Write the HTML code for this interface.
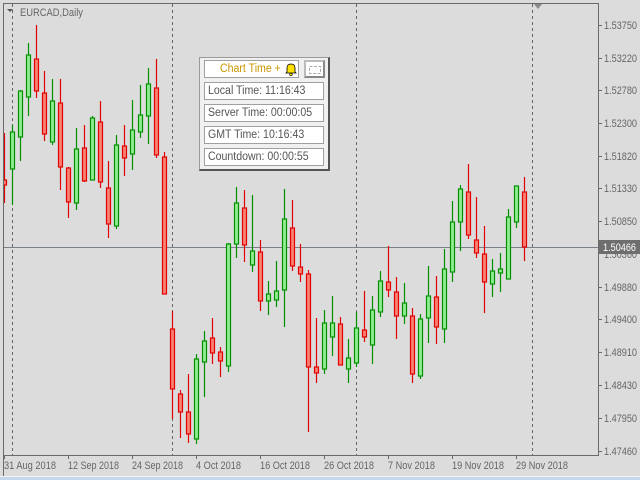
<!DOCTYPE html>
<html><head><meta charset="utf-8"><style>
html,body{margin:0;padding:0;width:640px;height:480px;overflow:hidden;background:#dcdcdc;font-family:"Liberation Sans",sans-serif}
svg{position:absolute;left:0;top:0}
.p{position:absolute;left:199px;top:57px;width:128px;height:111px;background:#f0f0f0;border:1px solid #9a9a9a;border-right:2px solid #555;border-bottom:2px solid #555}
.b{position:absolute;background:#fff;border:1px solid #a0a0a0;font-size:11.5px;color:#555;line-height:16px;box-sizing:border-box;height:18px;padding-left:3px;white-space:nowrap}
.b span{display:inline-block;transform:scaleX(.92);transform-origin:left}
</style></head><body>
<svg width="640" height="480" font-family="Liberation Sans, sans-serif">
<rect x="0" y="477" width="640" height="3" fill="#c5d7ec"/>
<rect x="0" y="476" width="640" height="1" fill="#f4f4f4"/>
<g stroke="#666" stroke-dasharray="3,3" stroke-width="1">
<line x1="12.5" y1="4" x2="12.5" y2="455"/><line x1="172.5" y1="4" x2="172.5" y2="455"/>
<line x1="356.5" y1="4" x2="356.5" y2="455"/><line x1="532.5" y1="4" x2="532.5" y2="455"/>
</g>
<line x1="3" y1="247.5" x2="598" y2="247.5" stroke="#7a8088" stroke-width="1"/>
<g stroke-width="1.2">
<g stroke="#e00000" fill="#fa8072">
<line x1="4.5" y1="133" x2="4.5" y2="203"/><rect x="2.5" y="180" width="4" height="5"/>
<line x1="36.5" y1="25" x2="36.5" y2="98"/><rect x="34.5" y="59" width="4" height="32"/>
<line x1="44.5" y1="71" x2="44.5" y2="141"/><rect x="42.5" y="93" width="4" height="41"/>
<line x1="60.5" y1="79" x2="60.5" y2="190"/><rect x="58.5" y="103" width="4" height="64"/>
<line x1="68.5" y1="167" x2="68.5" y2="218"/><rect x="66.5" y="168" width="4" height="34"/>
<line x1="84.5" y1="125" x2="84.5" y2="182"/><rect x="82.5" y="148" width="4" height="33"/>
<line x1="100.5" y1="101" x2="100.5" y2="188"/><rect x="98.5" y="122" width="4" height="60"/>
<line x1="108.5" y1="161" x2="108.5" y2="238"/><rect x="106.5" y="188" width="4" height="36"/>
<line x1="124.5" y1="125" x2="124.5" y2="176"/><rect x="122.5" y="146" width="4" height="12"/>
<line x1="156.5" y1="59" x2="156.5" y2="158"/><rect x="154.5" y="88" width="4" height="67"/>
<line x1="164.5" y1="152" x2="164.5" y2="294"/><rect x="162.5" y="157" width="4" height="137"/>
<line x1="172.5" y1="311" x2="172.5" y2="419"/><rect x="170.5" y="329" width="4" height="60"/>
<line x1="180.5" y1="390" x2="180.5" y2="438"/><rect x="178.5" y="394" width="4" height="18"/>
<line x1="188.5" y1="374" x2="188.5" y2="443"/><rect x="186.5" y="412" width="4" height="22"/>
<line x1="212.5" y1="318" x2="212.5" y2="364"/><rect x="210.5" y="338" width="4" height="15"/>
<line x1="220.5" y1="347" x2="220.5" y2="377"/><rect x="218.5" y="352" width="4" height="9"/>
<line x1="244.5" y1="190" x2="244.5" y2="262"/><rect x="242.5" y="208" width="4" height="37"/>
<line x1="260.5" y1="240" x2="260.5" y2="311"/><rect x="258.5" y="252" width="4" height="49"/>
<line x1="292.5" y1="200" x2="292.5" y2="271"/><rect x="290.5" y="228" width="4" height="38"/>
<line x1="300.5" y1="244" x2="300.5" y2="282"/><rect x="298.5" y="267" width="4" height="7"/>
<line x1="308.5" y1="270" x2="308.5" y2="432"/><rect x="306.5" y="274" width="4" height="93"/>
<line x1="316.5" y1="318" x2="316.5" y2="383"/><rect x="314.5" y="367" width="4" height="6"/>
<line x1="340.5" y1="317" x2="340.5" y2="365"/><rect x="338.5" y="324" width="4" height="41"/>
<line x1="364.5" y1="291" x2="364.5" y2="342"/><rect x="362.5" y="330" width="4" height="7"/>
<line x1="388.5" y1="246" x2="388.5" y2="297"/><rect x="386.5" y="282" width="4" height="8"/>
<line x1="396.5" y1="277" x2="396.5" y2="339"/><rect x="394.5" y="292" width="4" height="24"/>
<line x1="412.5" y1="308" x2="412.5" y2="383"/><rect x="410.5" y="316" width="4" height="58"/>
<line x1="436.5" y1="276" x2="436.5" y2="344"/><rect x="434.5" y="297" width="4" height="30"/>
<line x1="468.5" y1="164" x2="468.5" y2="239"/><rect x="466.5" y="192" width="4" height="43"/>
<line x1="476.5" y1="197" x2="476.5" y2="258"/><rect x="474.5" y="240" width="4" height="13"/>
<line x1="484.5" y1="226" x2="484.5" y2="313"/><rect x="482.5" y="254" width="4" height="28"/>
<line x1="524.5" y1="177" x2="524.5" y2="261"/><rect x="522.5" y="192" width="4" height="55"/>
</g>
<g stroke="#009000" fill="#90ee90">
<line x1="12.5" y1="125" x2="12.5" y2="205"/><rect x="10.5" y="132" width="4" height="37"/>
<line x1="20.5" y1="90" x2="20.5" y2="161"/><rect x="18.5" y="91" width="4" height="46"/>
<line x1="28.5" y1="43" x2="28.5" y2="116"/><rect x="26.5" y="55" width="4" height="42"/>
<line x1="52.5" y1="79" x2="52.5" y2="145"/><rect x="50.5" y="101" width="4" height="41"/>
<line x1="76.5" y1="128" x2="76.5" y2="210"/><rect x="74.5" y="149" width="4" height="54"/>
<line x1="92.5" y1="116" x2="92.5" y2="180"/><rect x="90.5" y="118" width="4" height="62"/>
<line x1="116.5" y1="135" x2="116.5" y2="229"/><rect x="114.5" y="145" width="4" height="81"/>
<line x1="132.5" y1="100" x2="132.5" y2="170"/><rect x="130.5" y="130" width="4" height="24"/>
<line x1="140.5" y1="85" x2="140.5" y2="138"/><rect x="138.5" y="115" width="4" height="17"/>
<line x1="148.5" y1="68" x2="148.5" y2="144"/><rect x="146.5" y="84" width="4" height="32"/>
<line x1="196.5" y1="354" x2="196.5" y2="444"/><rect x="194.5" y="359" width="4" height="80"/>
<line x1="204.5" y1="331" x2="204.5" y2="397"/><rect x="202.5" y="341" width="4" height="21"/>
<line x1="228.5" y1="243" x2="228.5" y2="372"/><rect x="226.5" y="244" width="4" height="122"/>
<line x1="236.5" y1="187" x2="236.5" y2="258"/><rect x="234.5" y="203" width="4" height="41"/>
<line x1="252.5" y1="195" x2="252.5" y2="272"/><rect x="250.5" y="251" width="4" height="14"/>
<line x1="268.5" y1="281" x2="268.5" y2="315"/><rect x="266.5" y="294" width="4" height="7"/>
<line x1="276.5" y1="261" x2="276.5" y2="307"/><rect x="274.5" y="291" width="4" height="9"/>
<line x1="284.5" y1="189" x2="284.5" y2="327"/><rect x="282.5" y="219" width="4" height="71"/>
<line x1="324.5" y1="310" x2="324.5" y2="374"/><rect x="322.5" y="323" width="4" height="46"/>
<line x1="332.5" y1="296" x2="332.5" y2="356"/><rect x="330.5" y="323" width="4" height="14"/>
<line x1="348.5" y1="339" x2="348.5" y2="383"/><rect x="346.5" y="358" width="4" height="11"/>
<line x1="356.5" y1="312" x2="356.5" y2="367"/><rect x="354.5" y="328" width="4" height="35"/>
<line x1="372.5" y1="296" x2="372.5" y2="364"/><rect x="370.5" y="310" width="4" height="35"/>
<line x1="380.5" y1="271" x2="380.5" y2="317"/><rect x="378.5" y="281" width="4" height="31"/>
<line x1="404.5" y1="283" x2="404.5" y2="324"/><rect x="402.5" y="303" width="4" height="13"/>
<line x1="420.5" y1="314" x2="420.5" y2="379"/><rect x="418.5" y="319" width="4" height="57"/>
<line x1="428.5" y1="266" x2="428.5" y2="343"/><rect x="426.5" y="296" width="4" height="22"/>
<line x1="444.5" y1="249" x2="444.5" y2="343"/><rect x="442.5" y="269" width="4" height="60"/>
<line x1="452.5" y1="201" x2="452.5" y2="282"/><rect x="450.5" y="222" width="4" height="50"/>
<line x1="460.5" y1="185" x2="460.5" y2="251"/><rect x="458.5" y="189" width="4" height="33"/>
<line x1="492.5" y1="259" x2="492.5" y2="297"/><rect x="490.5" y="271" width="4" height="13"/>
<line x1="500.5" y1="253" x2="500.5" y2="292"/><rect x="498.5" y="269" width="4" height="4"/>
<line x1="508.5" y1="209" x2="508.5" y2="279"/><rect x="506.5" y="217" width="4" height="62"/>
<line x1="516.5" y1="186" x2="516.5" y2="228"/><rect x="514.5" y="186" width="4" height="36"/>
</g></g>
<rect x="0" y="0" width="3" height="476" fill="#dcdcdc"/>
<g stroke="#6a6a6a" fill="none"><line x1="3.5" y1="3" x2="3.5" y2="476"/><line x1="3" y1="3.5" x2="598" y2="3.5"/><line x1="598.5" y1="3" x2="598.5" y2="455"/><line x1="3" y1="455.5" x2="599" y2="455.5"/></g>
<polygon points="7,9 13,9 10,12" fill="#555"/>
<text x="20" y="16" font-size="11" fill="#666" textLength="63" lengthAdjust="spacingAndGlyphs">EURCAD,Daily</text>
<polygon points="534,4 542,4 538,9" fill="#8a8a8a"/>
<g stroke="#6a6a6a">
<line x1="598" y1="25.5" x2="602" y2="25.5"/><line x1="598" y1="58.5" x2="602" y2="58.5"/><line x1="598" y1="90.5" x2="602" y2="90.5"/><line x1="598" y1="123.5" x2="602" y2="123.5"/><line x1="598" y1="156.5" x2="602" y2="156.5"/><line x1="598" y1="188.5" x2="602" y2="188.5"/><line x1="598" y1="221.5" x2="602" y2="221.5"/><line x1="598" y1="287.5" x2="602" y2="287.5"/><line x1="598" y1="319.5" x2="602" y2="319.5"/><line x1="598" y1="352.5" x2="602" y2="352.5"/><line x1="598" y1="385.5" x2="602" y2="385.5"/><line x1="598" y1="418.5" x2="602" y2="418.5"/><line x1="598" y1="451.5" x2="602" y2="451.5"/>
<line x1="4.5" y1="455" x2="4.5" y2="459"/><line x1="68.5" y1="455" x2="68.5" y2="459"/><line x1="132.5" y1="455" x2="132.5" y2="459"/><line x1="196.5" y1="455" x2="196.5" y2="459"/><line x1="260.5" y1="455" x2="260.5" y2="459"/><line x1="324.5" y1="455" x2="324.5" y2="459"/><line x1="388.5" y1="455" x2="388.5" y2="459"/><line x1="452.5" y1="455" x2="452.5" y2="459"/><line x1="516.5" y1="455" x2="516.5" y2="459"/>
</g>
<g font-size="11" fill="#666" lengthAdjust="spacingAndGlyphs">
<text x="604" y="29" textLength="33" lengthAdjust="spacingAndGlyphs">1.53750</text><text x="604" y="62" textLength="33" lengthAdjust="spacingAndGlyphs">1.53220</text><text x="604" y="94" textLength="33" lengthAdjust="spacingAndGlyphs">1.52780</text><text x="604" y="127" textLength="33" lengthAdjust="spacingAndGlyphs">1.52300</text><text x="604" y="160" textLength="33" lengthAdjust="spacingAndGlyphs">1.51820</text><text x="604" y="192" textLength="33" lengthAdjust="spacingAndGlyphs">1.51330</text><text x="604" y="225" textLength="33" lengthAdjust="spacingAndGlyphs">1.50850</text><text x="604" y="258" textLength="33" lengthAdjust="spacingAndGlyphs">1.50360</text><text x="604" y="291" textLength="33" lengthAdjust="spacingAndGlyphs">1.49880</text><text x="604" y="323" textLength="33" lengthAdjust="spacingAndGlyphs">1.49400</text><text x="604" y="356" textLength="33" lengthAdjust="spacingAndGlyphs">1.48910</text><text x="604" y="389" textLength="33" lengthAdjust="spacingAndGlyphs">1.48430</text><text x="604" y="422" textLength="33" lengthAdjust="spacingAndGlyphs">1.47950</text><text x="604" y="455" textLength="33" lengthAdjust="spacingAndGlyphs">1.47460</text>
<text x="4" y="469" textLength="52" lengthAdjust="spacingAndGlyphs">31 Aug 2018</text><text x="68" y="469" textLength="51" lengthAdjust="spacingAndGlyphs">12 Sep 2018</text><text x="132" y="469" textLength="51" lengthAdjust="spacingAndGlyphs">24 Sep 2018</text><text x="196" y="469" textLength="45" lengthAdjust="spacingAndGlyphs">4 Oct 2018</text><text x="260" y="469" textLength="50" lengthAdjust="spacingAndGlyphs">16 Oct 2018</text><text x="324" y="469" textLength="50" lengthAdjust="spacingAndGlyphs">26 Oct 2018</text><text x="388" y="469" textLength="47" lengthAdjust="spacingAndGlyphs">7 Nov 2018</text><text x="452" y="469" textLength="52" lengthAdjust="spacingAndGlyphs">19 Nov 2018</text><text x="516" y="469" textLength="52" lengthAdjust="spacingAndGlyphs">29 Nov 2018</text>
</g>
<rect x="599" y="240" width="41" height="14" fill="#6e6e6e"/>
<text x="603" y="251" font-size="11" fill="#fff" textLength="33" lengthAdjust="spacingAndGlyphs">1.50466</text>
</svg>
<div class="p">
<div class="b" style="left:4px;top:2px;width:95px;color:#c89600;padding-left:15px"><span>Chart Time +</span>
<svg width="14" height="14" style="position:absolute;left:79px;top:1px" viewBox="0 0 14 14"><path d="M3 10 L3 6 Q3 2 7 2 Q11 2 11 6 L11 10 L12 11 L2 11 Z" fill="#ffe000" stroke="#000" stroke-width="0.8"/><circle cx="7" cy="12.5" r="1.3" fill="#ffe000" stroke="#000" stroke-width="0.6"/></svg></div>
<div class="b" style="left:104px;top:2px;width:21px;border:2px solid #bbb;border-right-color:#888;border-bottom-color:#888"><svg width="14" height="10" style="position:absolute;left:2px;top:3px"><rect x="1.5" y="1.5" width="11" height="7" fill="none" stroke="#aaa" stroke-dasharray="3,1.5"/></svg></div>
<div class="b" style="left:4px;top:24px;width:120px"><span>Local Time: 11:16:43</span></div>
<div class="b" style="left:4px;top:46px;width:120px"><span>Server Time: 00:00:05</span></div>
<div class="b" style="left:4px;top:68px;width:120px"><span>GMT Time: 10:16:43</span></div>
<div class="b" style="left:4px;top:90px;width:120px"><span>Countdown: 00:00:55</span></div>
</div>
</body></html>
